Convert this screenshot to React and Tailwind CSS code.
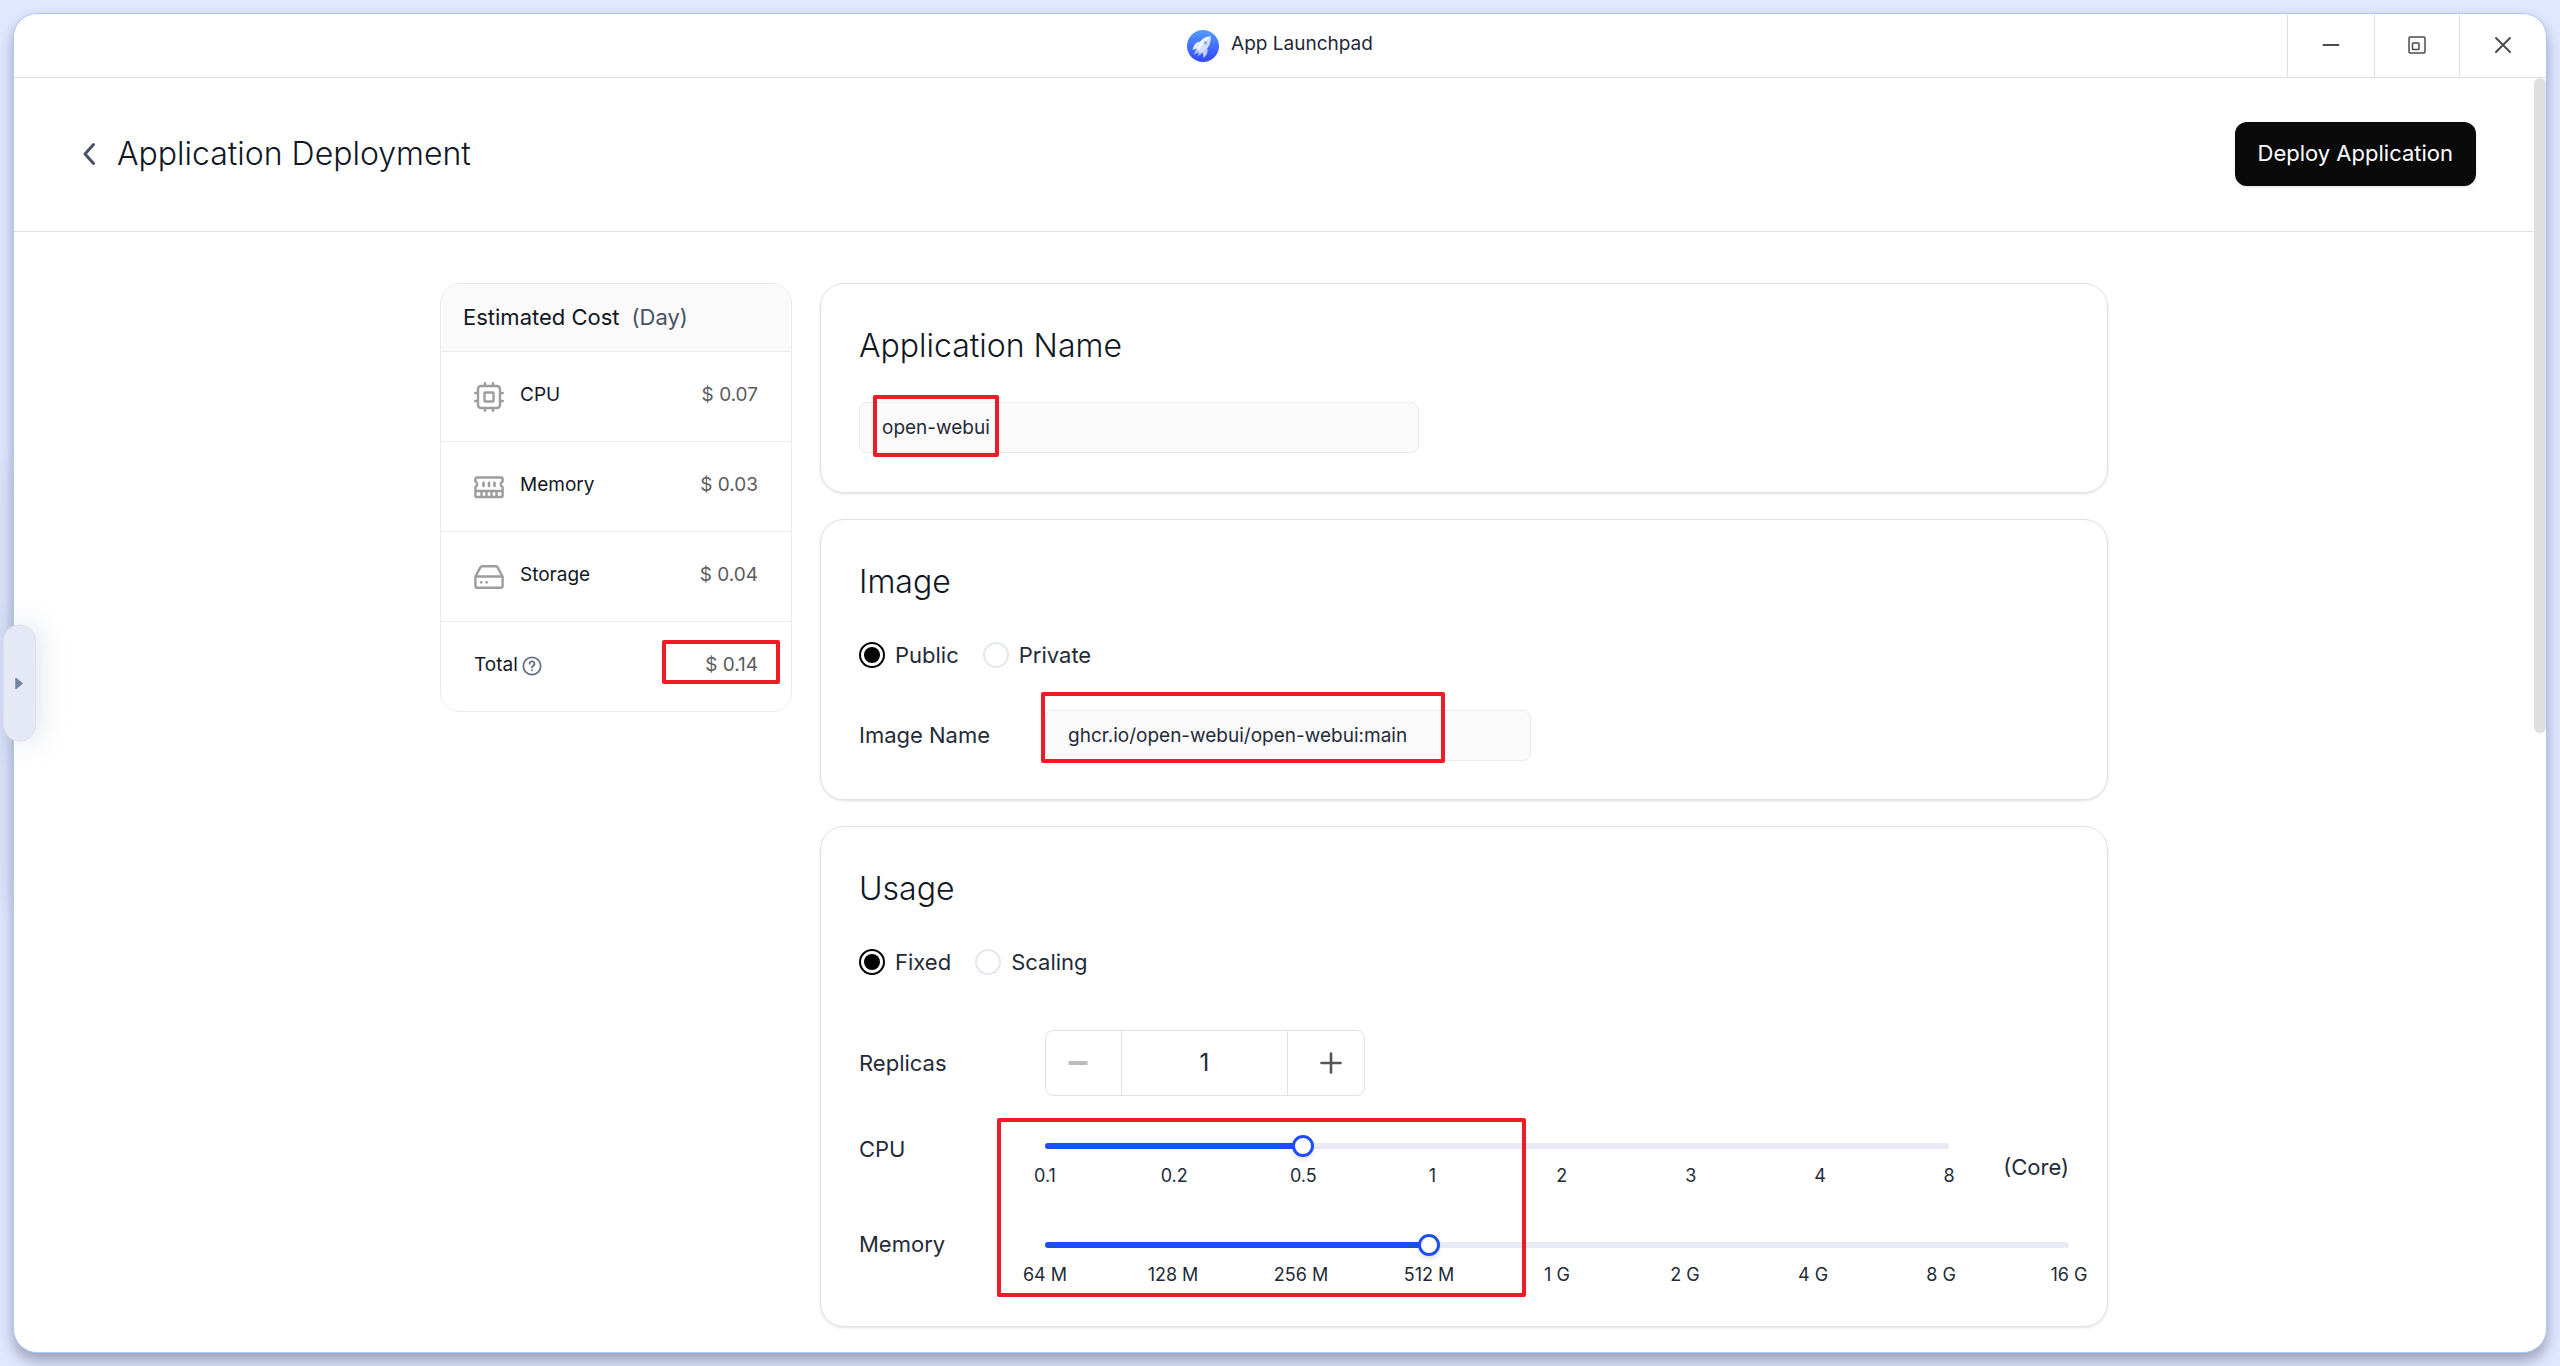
import React, { useState } from "react";

const CPU_STEPS = ["0.1", "0.2", "0.5", "1", "2", "3", "4", "8"];
const MEMORY_STEPS = ["64 M", "128 M", "256 M", "512 M", "1 G", "2 G", "4 G", "8 G", "16 G"];

function RocketLogo() {
  return (
    <svg className="size-8" viewBox="0 0 32 32" aria-hidden="true">
      <defs>
        <linearGradient id="logoBg" x1="0" y1="0" x2="0" y2="1">
          <stop offset="0" stopColor="#549bff" />
          <stop offset="1" stopColor="#3347fb" />
        </linearGradient>
        <linearGradient id="logoFlame" x1="1" y1="0" x2="0" y2="1">
          <stop offset="0" stopColor="#fff" stopOpacity="0.9" />
          <stop offset="1" stopColor="#fff" stopOpacity="0.35" />
        </linearGradient>
      </defs>
      <circle cx="16" cy="16" r="16" fill="url(#logoBg)" />
      <path d="M13 11.500C9 12 6.500 15 5.500 20L9.500 18.500Z" fill="#e3ebff" />
      <path d="M20.500 18.500C21 22.500 19.500 25.500 16.500 28L16 22.500Z" fill="#c6d4ff" />
      <path d="M9.500 18.500L6.500 25L12 22.500L10.500 26.500L16 22.500L13 18Z" fill="url(#logoFlame)" />
      <path d="M23.500 6.200C17.500 6.500 13 9.500 9.500 18.500L12 20L14.500 22.500C21.500 19 24 13.500 23.500 6.200Z" fill="#f5f8ff" />
      <path d="M23.500 6.200C19.500 10 15 15 12 20L14.500 22.500C21.500 19 24 13.500 23.500 6.200Z" fill="#d3deff" />
      <circle cx="18.500" cy="12.800" r="1.700" fill="#86a6ff" />
    </svg>
  );
}

function CpuIcon() {
  return (
    <svg className="size-[30px]" viewBox="0 0 30 30" fill="none" stroke="#9d9d9f" strokeWidth="2.400" strokeLinecap="round" aria-hidden="true">
      <rect x="4" y="4" width="22" height="22" rx="3" />
      <rect x="10.500" y="10.500" width="9" height="9" rx="0.500" />
      <path d="M11 1.200V4M19 1.200V4M11 26v2.800M19 26v2.800M1.200 11H4M1.200 19H4M26 11h2.800M26 19h2.800" />
    </svg>
  );
}

function MemoryIcon() {
  return (
    <svg className="size-[30px]" viewBox="0 0 30 30" fill="none" stroke="#9d9d9f" strokeWidth="2.400" strokeLinecap="round" strokeLinejoin="round" aria-hidden="true">
      <path d="M3 5.500H27A1.600 1.600 0 0 1 28.600 7.100V9.500A3 3 0 0 0 28.600 15V23.400A1.600 1.600 0 0 1 27 25H3A1.600 1.600 0 0 1 1.400 23.400V15A3 3 0 0 0 1.400 9.500V7.100A1.600 1.600 0 0 1 3 5.500Z" />
      <path d="M2 19H28M7.500 19.500V24.500M12.500 19.500V24.500M17.500 19.500V24.500M22.500 19.500V24.500" />
      <path d="M9.500 10.800V14M15 10.800V14M20.500 10.800V14" strokeWidth="2.600" />
    </svg>
  );
}

function StorageIcon() {
  return (
    <svg className="size-[30px]" viewBox="0 0 30 30" fill="none" stroke="#9d9d9f" strokeWidth="2.400" strokeLinecap="round" strokeLinejoin="round" aria-hidden="true">
      <path d="M1.400 14.500L6.500 5.200A2 2 0 0 1 8.300 4.200H21.700A2 2 0 0 1 23.500 5.200L28.600 14.500V23.800A2 2 0 0 1 26.600 25.800H3.400A2 2 0 0 1 1.400 23.800ZM1.400 14.500H28.600" />
      <path d="M7.200 20.300H7.300M12.500 20.300H12.600" strokeWidth="2.800" />
    </svg>
  );
}

function TitleBar() {
  const control = "flex items-center justify-center border-l border-[#dee0e2] pb-px";
  return (
    <header className="grid h-16 shrink-0 grid-cols-[1fr_auto_1fr] border-b border-[#dee0e2]">
      <span />
      <div className="flex items-center gap-3">
        <RocketLogo />
        <span className="pb-0.5 text-[19px] text-[#1f2937]">App Launchpad</span>
      </div>
      <div className="flex justify-end">
        <button aria-label="Minimize" className={`w-[87px] ${control}`}>
          <svg className="size-[18px]" viewBox="0 0 18 18" stroke="#4b4b4b" strokeWidth="2" strokeLinecap="round" aria-hidden="true">
            <path d="M1.500 9H16.500" />
          </svg>
        </button>
        <button aria-label="Restore" className={`w-[85px] ${control}`}>
          <svg className="size-[18px]" viewBox="0 0 18 18" fill="none" stroke="#4b4b4b" strokeWidth="1.500" aria-hidden="true">
            <rect x="1" y="1" width="16" height="16" rx="1.200" />
            <rect x="4.500" y="7" width="6.500" height="6.500" rx="0.800" />
          </svg>
        </button>
        <button aria-label="Close" className={`w-[87px] ${control}`}>
          <svg className="size-[18px]" viewBox="0 0 18 18" stroke="#4b4b4b" strokeWidth="2" strokeLinecap="round" aria-hidden="true">
            <path d="M2 2L16 16M16 2L2 16" />
          </svg>
        </button>
      </div>
    </header>
  );
}

function PageHeader() {
  return (
    <div className="flex h-[154px] items-center justify-between border-b border-[#dee0e2] pr-[58px] pb-0.5 pl-[68px]">
      <div className="flex items-center gap-[19px]">
        <button aria-label="Back">
          <svg className="h-6 w-4" viewBox="0 0 16 24" fill="none" stroke="#485264" strokeWidth="3" strokeLinecap="round" strokeLinejoin="round" aria-hidden="true">
            <path d="M11.500 2.500L3 12L11.500 21.500" />
          </svg>
        </button>
        <h1 className="text-[32px] leading-10 font-light text-[#111824]">Application Deployment</h1>
      </div>
      <button className="h-16 rounded-xl bg-[#0a0a0a] px-[23px] text-[22px] text-white shadow-sm">Deploy Application</button>
    </div>
  );
}

function Highlight({ className }) {
  return <span aria-hidden="true" className={`pointer-events-none absolute z-10 rounded-[2px] border-4 border-[#ee1c25] ${className}`} />;
}

function CostRow({ icon, label, value, children }) {
  return (
    <div className="flex h-[90px] items-center border-t border-[#e8ebf0] px-[33px] pb-0.5">
      {icon && <span className="mr-4 pt-0.5">{icon}</span>}
      <dt className="flex items-center gap-1 text-[#111824]">{label}</dt>
      <dd className="relative ml-auto text-[#5a5c60]">
        {value}
        {children}
      </dd>
    </div>
  );
}

function CostCard() {
  return (
    <aside className="w-[352px] shrink-0 self-start overflow-hidden rounded-[20px] border border-[#e8ebf0]">
      <h2 className="flex h-[67px] items-center gap-3 bg-[#fafafa] px-[22px] text-[22px] text-[#111824]">
        Estimated Cost <span className="text-[#485264]">(Day)</span>
      </h2>
      <dl className="text-[19px]">
        <CostRow icon={<CpuIcon />} label="CPU" value="$ 0.07" />
        <CostRow icon={<MemoryIcon />} label="Memory" value="$ 0.03" />
        <CostRow icon={<StorageIcon />} label="Storage" value="$ 0.04" />
        <CostRow
          label={
            <>
              Total
              <svg className="size-5" viewBox="0 0 20 20" fill="none" stroke="#667085" strokeWidth="1.800" strokeLinecap="round" aria-hidden="true">
                <circle cx="10" cy="10" r="8.700" />
                <path d="M7.600 7.800A2.400 2.400 0 1 1 11 9.900C10.300 10.300 10 10.700 10 11.500M10 14.200V14.300" />
              </svg>
            </>
          }
          value="$ 0.14"
        >
          <Highlight className="-top-[11px] -right-[22px] -bottom-1 w-[118px]" />
        </CostRow>
      </dl>
    </aside>
  );
}

function Card({ title, className, children }) {
  return (
    <section className={`rounded-[24px] border border-[#dfe2e6] px-[38px] pt-[42px] shadow-sm ${className}`}>
      <h2 className="text-[32px] leading-10 font-light text-[#111824]">{title}</h2>
      {children}
    </section>
  );
}

function RadioGroup({ name, options }) {
  return (
    <div role="radiogroup" aria-label={name} className="mt-10 flex gap-6">
      {options.map((option, i) => (
        <label key={option} className="flex items-center gap-[10px] leading-[26px]">
          <input
            type="radio"
            name={name}
            defaultChecked={i === 0}
            className="size-[26px] appearance-none rounded-full border-2 border-[#e2e8f0] bg-clip-content p-[3px] checked:border-black checked:bg-black"
          />
          {option}
        </label>
      ))}
    </div>
  );
}

function TickSlider({ id, steps, initial }) {
  const [value, setValue] = useState(initial);
  const max = steps.length - 1;
  return (
    <div className="flex-1">
      <div className="relative flex h-[22px] items-center">
        <div className="h-1.5 w-full overflow-hidden rounded-[3px] bg-[#e8ebf3]">
          <div className="h-full bg-[#1d4ef5]" style={{ width: `${(value / max) * 100}%` }} />
        </div>
        <input
          id={id}
          type="range"
          min="0"
          max={max}
          value={value}
          onChange={(e) => setValue(Number(e.target.value))}
          className="absolute -left-[11px] h-[22px] w-[calc(100%+22px)] appearance-none bg-transparent [&::-webkit-slider-thumb]:size-[22px] [&::-webkit-slider-thumb]:appearance-none [&::-webkit-slider-thumb]:rounded-full [&::-webkit-slider-thumb]:border-3 [&::-webkit-slider-thumb]:border-[#1d4ef5] [&::-webkit-slider-thumb]:bg-white [&::-webkit-slider-thumb]:shadow-md"
        />
      </div>
      <div className="mt-[7px] flex justify-between text-[18px] leading-6">
        {steps.map((step) => (
          <span key={step} className="flex w-0 justify-center whitespace-nowrap">
            {step}
          </span>
        ))}
      </div>
    </div>
  );
}

function UsageCard() {
  const [replicas, setReplicas] = useState(1);
  return (
    <Card title="Usage" className="pb-[39px]">
      <RadioGroup name="Usage type" options={["Fixed", "Scaling"]} />
      <div className="mt-[55px] flex items-center">
        <label htmlFor="replicas" className="w-[186px]">Replicas</label>
        <div className="flex h-[66px] w-80 overflow-hidden rounded-lg border border-[#dfe2e6]">
          <button
            aria-label="Decrease replicas"
            onClick={() => setReplicas(Math.max(1, replicas - 1))}
            className="flex w-[76px] items-center justify-center border-r border-[#dfe2e6] pr-3"
          >
            <svg className="size-5" viewBox="0 0 20 20" stroke="#bcbcbc" strokeWidth="4" aria-hidden="true">
              <path d="M0.500 10H19.500" />
            </svg>
          </button>
          <input
            id="replicas"
            value={replicas}
            onChange={(e) => setReplicas(Number(e.target.value) || 1)}
            className="w-0 flex-1 text-center text-[24px]"
          />
          <button
            aria-label="Increase replicas"
            onClick={() => setReplicas(replicas + 1)}
            className="flex w-[77px] items-center justify-center border-l border-[#dfe2e6] pl-2.5"
          >
            <svg className="size-[22px]" viewBox="0 0 22 22" stroke="#555" strokeWidth="2.600" strokeLinecap="round" aria-hidden="true">
              <path d="M1.500 11H20.500M11 1.500V20.500" />
            </svg>
          </button>
        </div>
      </div>
      <div className="relative mt-[39px] flex flex-col gap-[46px]">
        <div className="flex items-start">
          <label htmlFor="cpu" className="w-[186px] leading-7">CPU</label>
          <TickSlider id="cpu" steps={CPU_STEPS} initial={2} />
          <span className="ml-[54px] self-end leading-[42px]">(Core)</span>
        </div>
        <div className="flex items-start">
          <label htmlFor="memory" className="w-[186px] leading-5">Memory</label>
          <TickSlider id="memory" steps={MEMORY_STEPS} initial={3} />
        </div>
        <Highlight className="-top-[17px] -bottom-[10px] left-[138px] w-[529px]" />
      </div>
    </Card>
  );
}

const FIELD = "h-[51px] rounded-lg border border-[#e8ebf0] bg-[#fafafa] px-[22px] text-[19px]";

export default function App() {
  return (
    <div className="relative isolate flex min-h-screen overflow-hidden bg-[#e0e7ff] p-[13px] font-['Inter',sans-serif] text-[#242b38]">
      <div className="absolute top-1/2 left-0 -z-10 h-[440px] w-4 -translate-y-1/2 rounded-full bg-[#b9cfe4] opacity-60 blur-lg" />
      <div className="flex flex-1 flex-col overflow-hidden rounded-[24px] border border-[#adc8fc] bg-white shadow-[0_8px_14px_rgba(50,50,70,0.38)]">
        <TitleBar />
        <div className="flex flex-1">
          <div className="flex-1">
            <PageHeader />
            <main className="mx-auto flex max-w-[1668px] gap-7 pt-[51px] pb-[25px]">
              <CostCard />
              <form className="flex flex-1 flex-col gap-[26px] text-[22px]">
                <Card title={<label htmlFor="app-name">Application Name</label>} className="pb-[39px]">
                  <div className="relative mt-9 w-[560px]">
                    <input id="app-name" defaultValue="open-webui" className={`block w-full ${FIELD}`} />
                    <Highlight className="-top-[7px] -bottom-1 left-[14px] w-[126px]" />
                  </div>
                </Card>
                <Card title="Image" className="pb-[38px]">
                  <RadioGroup name="Image visibility" options={["Public", "Private"]} />
                  <div className="mt-[42px] flex items-center">
                    <label htmlFor="image-name" className="w-[186px]">Image Name</label>
                    <div className="relative w-[486px]">
                      <input id="image-name" defaultValue="ghcr.io/open-webui/open-webui:main" className={`block w-full ${FIELD}`} />
                      <Highlight className="-top-[18px] -bottom-0.5 -left-1 w-[404px]" />
                    </div>
                  </div>
                </Card>
                <UsageCard />
              </form>
            </main>
          </div>
          <div className="w-3 shrink-0">
            <div className="h-[51.4%] rounded-full bg-[#dedfe1]" />
          </div>
        </div>
      </div>
      <button
        aria-label="Expand side panel"
        className="absolute top-1/2 left-[3px] flex h-[117px] w-[33px] -translate-y-1/2 items-center justify-center rounded-2xl border border-[#dcdff0] bg-[#e5e8f5] pr-0.5 shadow-[4px_0_28px_rgba(120,140,180,0.24)]"
      >
        <svg className="h-3 w-2" viewBox="0 0 8 12" fill="#7685a3" stroke="#7685a3" strokeWidth="1.500" strokeLinejoin="round" aria-hidden="true">
          <path d="M1 1V11L7 6Z" />
        </svg>
      </button>
    </div>
  );
}
